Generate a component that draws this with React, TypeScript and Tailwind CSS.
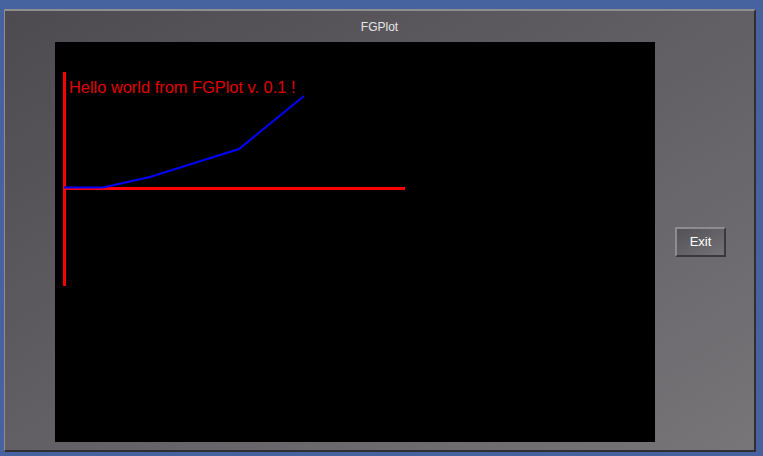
export default function App() {
  return (
    <div className="w-[763px] h-[456px] bg-[#4663a0] overflow-hidden pt-[9px] pl-[4px] font-['Liberation_Sans',Arial,sans-serif]">
      <div className="w-[752px] h-[443px] border-t-2 border-l border-t-[#8e8d90] border-l-[#8e8d90] border-r-2 border-b-2 border-r-[#2f2f33] border-b-[#2f2f33] bg-gradient-to-br from-[#4d4b50] to-[#787579] flex flex-col">
        <div className="h-[31px] flex items-center justify-center text-[12px] text-[#e6e6e6]">
          FGPlot
        </div>
        <div className="flex items-center pl-[50px]">
          <div className="w-[600px] h-[400px] bg-black">
            <svg width="600" height="400" viewBox="0 0 600 400">
              <rect x="8" y="30" width="3" height="214" fill="#ff0000" />
              <rect x="8" y="145" width="342" height="3" fill="#ff0000" />
              <polyline
                points="9,145.5 48,145.5 95,135 184,107 249,54"
                fill="none"
                stroke="#0000ff"
                strokeWidth="2"
              />
              <text
                x="14"
                y="51"
                fill="#e00000"
                fontSize="16.4"
                fontFamily="Liberation Sans, Arial, sans-serif"
              >
                Hello world from FGPlot v. 0.1 !
              </text>
            </svg>
          </div>
          <button className="ml-[20px] w-[51px] h-[30px] border-t-2 border-l-2 border-t-[#8d8c90] border-l-[#8d8c90] border-r-2 border-b-2 border-r-[#39383d] border-b-[#39383d] bg-gradient-to-br from-[#535156] to-[#747276] text-[13px] text-white flex items-center justify-center">
            Exit
          </button>
        </div>
      </div>
    </div>
  );
}
